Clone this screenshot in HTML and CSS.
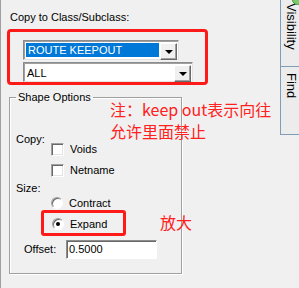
FILE: index.html
```html
<!DOCTYPE html>
<html lang="en">
<head>
<meta charset="UTF-8">
<title>Copy to Class/Subclass</title>
<link rel="stylesheet" href="styles.css">
</head>
<body>
<div class="window">
    <div class="panel">
        <div class="title">Copy to Class/Subclass:</div>
        <div class="mark combos">
            <div class="combo combo-class">
                <div class="combo-text selected">ROUTE KEEPOUT</div>
                <div class="combo-btn"><span class="arrow"></span></div>
            </div>
            <div class="combo combo-sub">
                <div class="combo-text">ALL</div>
                <div class="combo-btn"><span class="arrow"></span></div>
            </div>
        </div>

        <fieldset class="group">
            <legend>Shape Options</legend>
            <div class="label copy-label">Copy:</div>
            <div class="option voids"><span class="check"></span>Voids</div>
            <div class="option netname"><span class="check"></span>Netname</div>
            <div class="label size-label">Size:</div>
            <div class="option contract"><span class="radio"></span>Contract</div>
            <div class="mark expand-box">
                <div class="option expand"><span class="radio on"></span>Expand</div>
            </div>
            <div class="offset">
                <span class="label">Offset:</span>
                <div class="textbox">0.5000</div>
            </div>
        </fieldset>

        <div class="note note-main">注：keep out表示向往<br>允许里面禁止</div>
        <div class="note note-expand">放大</div>
    </div>
    <div class="tabs">
        <div class="tab tab-vis">Visibility</div>
        <div class="tab tab-find">Find</div>
        <span class="corner"></span>
    </div>
</div>
</body>
</html>
```

FILE: styles.css
```css
body {
    margin: 0;
    background-color: #f0f0f0;
    font-family: 'Liberation Sans', Arial, sans-serif;
    font-size: 11px;
    color: #000;
    overflow: hidden;
}
.window {
    display: flex;
    width: 299px;
    height: 288px;
}
.panel {
    position: relative;
    width: 279px;
    height: 288px;
    border-left: 1px solid #a0a0a0;
}
.title {
    margin: 11px 0 0 9px;
    line-height: 13px;
}

/* red annotation frames */
.mark {
    border: 3px solid #ff1a1a;
    border-radius: 4px;
}
.combos {
    width: 182px;
    margin: 5px 0 0 6px;
    padding: 8px 0 0 13px;
}
.combo {
    display: flex;
    height: 16px;
    padding: 1px;
    background-color: #fff;
    border: 1px solid;
    border-color: #8c8c8c #e3e3e3 #e3e3e3 #8c8c8c;
    box-shadow: inset 1px 1px 0 #a0a0a0;
}
.combo-class {
    width: 152px;
}
.combo-sub {
    width: 166px;
    margin-top: 2px;
}
.combo-text {
    flex: 1;
    line-height: 16px;
    padding-left: 2px;
    margin-top: 1px;
}
.combo-text.selected {
    background-color: #0078d7;
    color: #fff;
    margin: 1px 1px 0 1px;
    line-height: 14px;
    height: 14px;
}
.combo-btn {
    width: 15px;
    height: 15px;
    margin-top: 1px;
    background-color: #f0f0f0;
    border: 1px solid;
    border-color: #fff #696969 #696969 #fff;
    box-shadow: inset -1px -1px 0 #a0a0a0;
    display: flex;
    align-items: center;
    justify-content: center;
}
.arrow {
    width: 0;
    height: 0;
    border-left: 4px solid transparent;
    border-right: 4px solid transparent;
    border-top: 4px solid #000;
}

/* group box */
.group {
    width: 171px;
    height: 181px;
    margin: 6px 0 0 8px;
    padding: 0;
    border: 1px solid #a0a0a0;
    box-shadow: inset 1px 1px 0 #fff, 1px 1px 0 #fff;
    box-sizing: content-box;
}
.group legend {
    margin-left: 6px;
    padding: 0 2px;
    line-height: 13px;
}
.label {
    line-height: 13px;
}
.copy-label {
    margin: 29px 0 0 6px;
}
.size-label {
    margin: 5px 0 0 6px;
}
.option {
    display: flex;
    align-items: center;
    height: 14px;
    line-height: 14px;
}
.voids {
    margin: -4px 0 0 41px;
}
.netname {
    margin: 7px 0 0 41px;
}
.contract {
    margin: 1px 0 0 41px;
}
.check {
    width: 11px;
    height: 11px;
    margin-right: 6px;
    background-color: #fff;
    border: 1px solid;
    border-color: #a0a0a0 #fff #fff #a0a0a0;
    box-shadow: inset 1px 1px 0 #696969, inset -1px -1px 0 #e3e3e3;
}
.radio {
    position: relative;
    width: 10px;
    height: 10px;
    margin-right: 6px;
    border-radius: 50%;
    background-color: #fff;
    border: 1px solid;
    border-color: #a0a0a0 #fff #fff #a0a0a0;
    box-shadow: inset 1px 1px 0 #696969;
}
.radio.on::after {
    content: "";
    position: absolute;
    left: 3px;
    top: 3px;
    width: 4px;
    height: 4px;
    border-radius: 50%;
    background-color: #000;
}
.expand-box {
    width: 79px;
    height: 20px;
    margin: 0 0 0 31px;
    border-radius: 3px;
}
.expand {
    margin: 4px 0 0 8px;
}
.offset {
    display: flex;
    align-items: center;
    margin: 3px 0 0 14px;
    height: 21px;
}
.offset .label {
    width: 42px;
}
.textbox {
    width: 87px;
    height: 17px;
    line-height: 17px;
    padding-left: 2px;
    background-color: #fff;
    border: 1px solid;
    border-color: #8c8c8c #fff #fff #8c8c8c;
    box-shadow: inset 1px 1px 0 #696969;
}

/* red hand-written notes */
.note {
    position: absolute;
    color: #ff2020;
    font-family: 'Noto Sans CJK SC', sans-serif;
    font-size: 16px;
    line-height: 22px;
}
.note-main {
    left: 109px;
    top: 98px;
}
.note-expand {
    left: 159px;
    top: 211px;
}

/* side tabs */
.tabs {
    position: relative;
    width: 19px;
    height: 288px;
}
.tab {
    box-sizing: border-box;
    writing-mode: vertical-rl;
    font-size: 13px;
    line-height: 19px;
    padding: 3px 0 0 1px;
    background-color: #ececec;
    border-left: 1px solid #7f9db9;
    border-bottom: 1px solid #7f9db9;
}
.tab-vis {
    height: 67px;
}
.tab-find {
    height: 68px;
    padding-top: 6px;
}
.corner {
    position: absolute;
    right: -4px;
    top: -6px;
    width: 9px;
    height: 9px;
    border-radius: 50%;
    border: 1px solid #3a9a3a;
    background-color: #7acb6a;
}
```
